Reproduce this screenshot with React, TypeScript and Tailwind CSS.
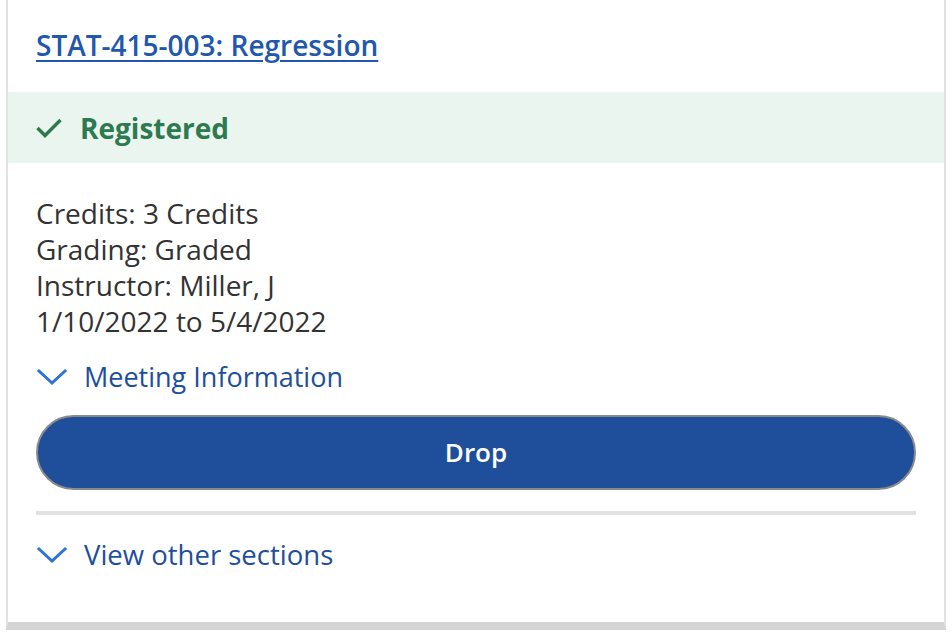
import React from "react";

const Chevron = () => (
  <svg width="32" height="20" viewBox="0 0 32 20" className="shrink-0">
    <polyline points="3,4 16,16 29,4" fill="none" stroke="#2c72d8" strokeWidth="3" strokeLinecap="square" />
  </svg>
);

export default function App() {
  return (
    <div className="w-[952px] h-[634px] bg-white" style={{ fontFamily: '"Open Sans", "Noto Sans", sans-serif' }}>
      <div className="ml-[6px] w-[940px] h-[630px] border-x-2 border-[#e2e2e2] border-b-8 border-b-[#d4d4d4] bg-white flex flex-col">
        <div className="h-[92px] px-[28px] pt-[29px]">
          <a href="#" className="text-[28px] leading-[32px] font-semibold text-[#2158ae] underline underline-offset-[4px] decoration-2">
            STAT-415-003: Regression
          </a>
        </div>
        <div className="h-[71px] bg-[#ebf5ef] flex items-center px-[28px] gap-[18px]">
          <svg width="26" height="22" viewBox="0 0 26 22" className="shrink-0">
            <polyline points="1.5,11 9,18.5 24.5,3" fill="none" stroke="#2e7a4f" strokeWidth="3.5" />
          </svg>
          <span className="text-[28px] leading-[36px] font-bold text-[#2e7a4f]">Registered</span>
        </div>
        <div className="px-[28px] pt-[32px] text-[28px] leading-[36px] text-[#333333]">
          <div>Credits: 3 Credits</div>
          <div>Grading: Graded</div>
          <div>Instructor: Miller, J</div>
          <div>1/10/2022 to 5/4/2022</div>
        </div>
        <div className="px-[28px] mt-[20px] flex items-center gap-[16px]">
          <Chevron />
          <span className="text-[27px] leading-[36px] text-[#1e4f9c]">Meeting Information</span>
        </div>
        <div className="px-[28px] mt-[20px]">
          <button className="w-full h-[75px] rounded-full border-2 border-[#8a8a8a] bg-[#1f4f9b] text-white text-[26px] font-semibold">
            Drop
          </button>
        </div>
        <div className="mx-[28px] mt-[21px] h-[4px] bg-[#e2e2e2]" />
        <div className="px-[28px] mt-[22px] flex items-center gap-[16px]">
          <Chevron />
          <span className="text-[27.5px] leading-[36px] text-[#1e4f9c]">View other sections</span>
        </div>
      </div>
    </div>
  );
}
